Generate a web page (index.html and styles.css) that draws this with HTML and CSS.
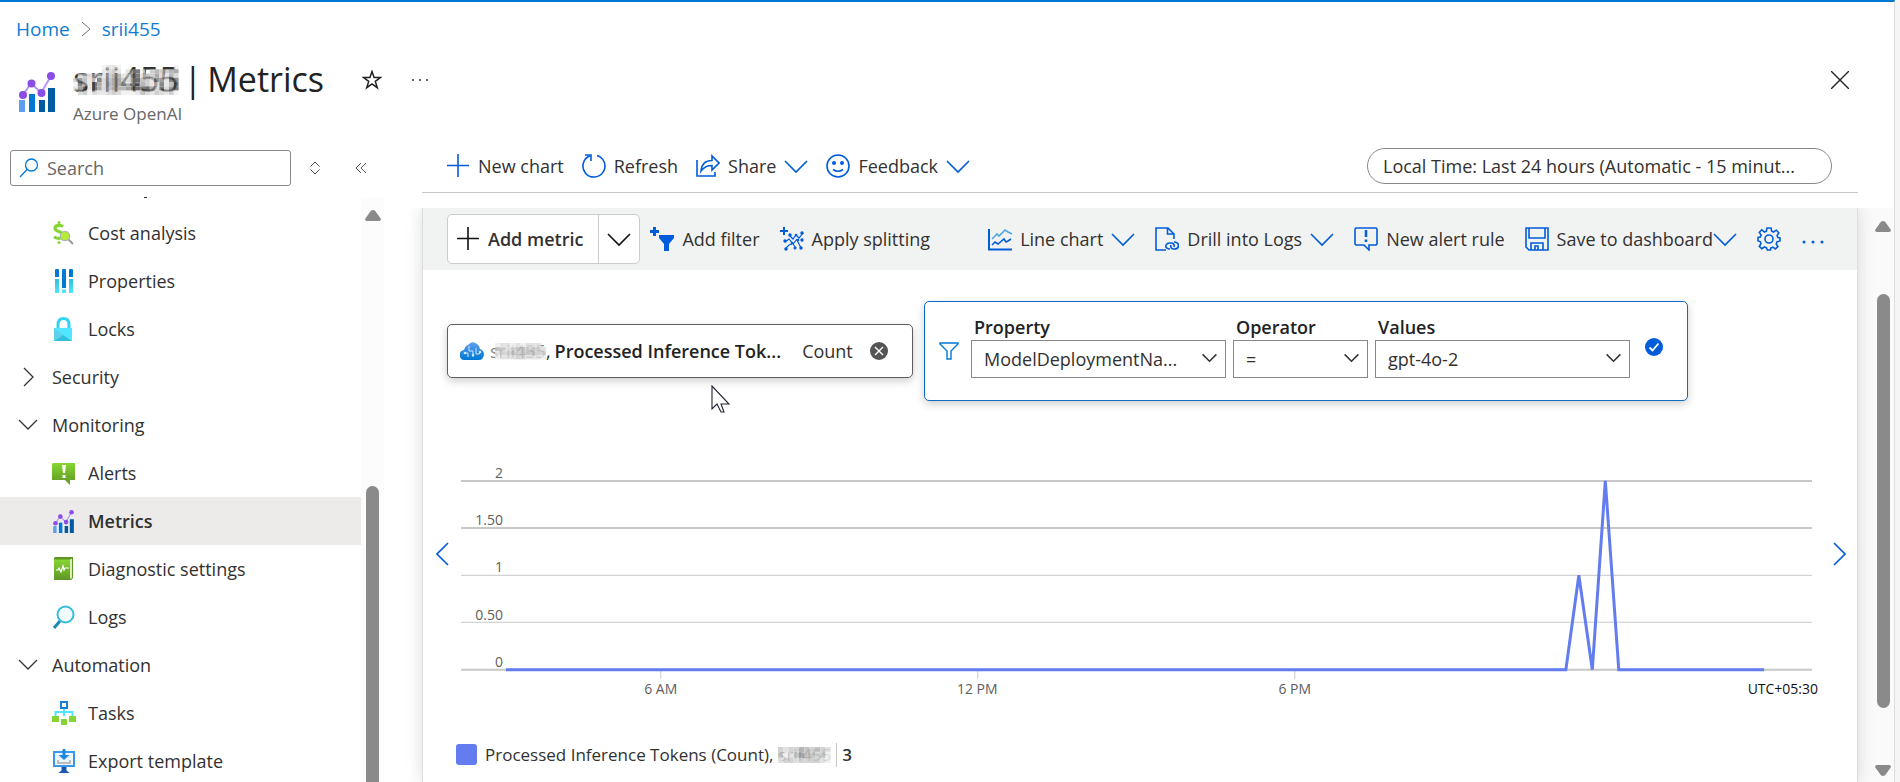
FILE: index.html
```html
<!doctype html>
<html lang="en">
<head>
    <meta charset="UTF-8">
    <title>Metrics</title>
    <link rel="stylesheet" href="styles.css">
</head>
<body>
    <svg class="defs" aria-hidden="true">
        <defs>
            <linearGradient id="green" x1="0" y1="0" x2="0" y2="1"><stop offset="0" stop-color="#86d633"/><stop offset="1" stop-color="#5e9624"/></linearGradient>
            <linearGradient id="cyan" x1="0" y1="0" x2="0" y2="1"><stop offset="0" stop-color="#32bedd"/><stop offset="1" stop-color="#50e6ff"/></linearGradient>
            <linearGradient id="cloud" x1="0" y1="0" x2="0" y2="1"><stop offset="0" stop-color="#5ea0ef"/><stop offset="1" stop-color="#0078d4"/></linearGradient>
        </defs>
        <symbol id="i-metrics" viewBox="0 0 36 40">
            <path fill="#5ea0ef" d="M0 28h6v12H0z"/><path fill="#0078d4" d="M10 22h6v18h-6z"/><path fill="#005ba1" d="M20 28h6v12h-6zM29 16h7v24h-7z"/>
            <path d="M4 23l8-12 10 10L32 4" fill="none" stroke="#b796f9" stroke-width="2"/>
            <g fill="#8a4ee6"><circle cx="4" cy="23" r="4"/><circle cx="12.500" cy="11.500" r="4"/><circle cx="22.500" cy="21" r="4"/><circle cx="32" cy="4" r="4"/></g>
        </symbol>
        <symbol id="i-down" viewBox="0 0 24 24"><path d="M1 7l11 11L23 7" fill="none" stroke="currentColor"/></symbol>
        <symbol id="i-plus" viewBox="0 0 24 24"><path d="M12 0v23M1 11.500h22" fill="none" stroke="currentColor" stroke-width="1.600"/></symbol>
    </svg>

    <div class="portal">
        <nav class="breadcrumb">
            <a href="#">Home</a>
            <svg width="10" height="16" viewBox="0 0 10 16"><path d="M1 1l8 7-8 7" fill="none" stroke="#777"/></svg>
            <a href="#">srii455</a>
        </nav>

        <header class="blade-head">
            <svg class="blade-icon" width="36" height="40"><use href="#i-metrics"/></svg>
            <div class="blade-title">
                <h1><span class="masked">srii455<svg class="mosaic js-mosaic" viewBox="0 0 22 7" preserveAspectRatio="none" data-rows="ffffffeddefffffffffffe,ffffffdcbdfd84efb9bb98,fdbcabdb99dc54dab8cd9c,c7ade5ca88bc73abd67d56,e5ad48c9889d859bdc5da4,d73d48ca899743438c4c74,fcbecddcbceeedacdbcdbe"></svg></span><span>|</span><span>Metrics</span></h1>
                <p>Azure OpenAI</p>
            </div>
            <button class="plain star" aria-label="Favorite">
                <svg width="20" height="20" viewBox="0 0 20 20"><path d="M10 1.500l2.100 6h6.400l-5.200 3.900 2 6.300L10 13.900l-5.300 3.800 2-6.300L1.500 7.500h6.400z" fill="none" stroke="#222" stroke-width="1.500"/></svg>
            </button>
            <button class="plain more" aria-label="More">
                <svg width="18" height="4" viewBox="0 0 18 4" fill="#333"><circle cx="2" cy="2" r="1"/><circle cx="9" cy="2" r="1"/><circle cx="16" cy="2" r="1"/></svg>
            </button>
            <button class="plain close" aria-label="Close">
                <svg width="18" height="18" viewBox="0 0 18 18"><path d="M0 0l18 18M18 0L0 18" stroke="#222" stroke-width="1.400"/></svg>
            </button>
        </header>

        <div class="blade-body">
            <aside class="side">
                <div class="side-top">
                    <label class="search">
                        <svg width="20" height="20" viewBox="0 0 20 20" fill="none" stroke="#0078d4" stroke-width="1.300"><circle cx="12.500" cy="7" r="6"/><path d="M8 11.500L1 19"/></svg>
                        <input type="text" placeholder="Search" aria-label="Search">
                    </label>
                    <button class="plain" aria-label="Sort"><svg width="12" height="14" viewBox="0 0 12 14" fill="none" stroke="#555"><path d="M1.500 5.500L6 1l4.500 4.500M1.500 8.500L6 13l4.500-4.500"/></svg></button>
                    <button class="plain" aria-label="Collapse"><svg width="12" height="12" viewBox="0 0 12 12" fill="none" stroke="#555"><path d="M6 1L1 6l5 5M11 1L6 6l5 5"/></svg></button>
                </div>
                <div class="side-scroll">
                    <ul class="menu">
                        <li><a href="#"><svg class="ico" viewBox="0 0 24 24">
                            <path d="M11 5.500C8.500 3.500 3 4 3 7.500S11 10 11 14s-6 4-9 1.800" fill="none" stroke="#86d633" stroke-width="3.200"/><circle cx="7" cy="1.500" r="1.500" fill="#86d633"/><circle cx="7" cy="21.500" r="1.500" fill="#86d633"/>
                            <circle cx="13" cy="15" r="4.600" fill="#b4ec36" stroke="#b3b3b3" stroke-width="1.200"/><path d="M16.500 18.500L21 23" stroke="#999" stroke-width="2"/></svg>Cost analysis</a></li>
                        <li><a href="#"><svg class="ico" viewBox="0 0 24 24">
                            <path fill="#0078d4" d="M3 0h3q1 0 1 1v7H3V1q0-1 1-1zM11 0h2q1 0 1 1v18h-4V1q0-1 1-1zM18 0h2q1 0 1 1v7h-4V1q0-1 1-1z"/>
                            <path fill="url(#cyan)" d="M3 10h4v14H3zM10 20.500h4V24h-4zM17 10h4v14h-4z"/></svg>Properties</a></li>
                        <li><a href="#"><svg class="ico" viewBox="0 0 24 24">
                            <path d="M6 12V8q0-6.500 5.500-6.500T17 8v4" fill="none" stroke="#32d4f5" stroke-width="3"/><path fill="#50e6ff" d="M2 11h18v13H2z"/><path fill="#32bedd" d="M2 24l9-6 9 6z"/><path fill="#5fd0ea" d="M2 11l9 7-9 6z"/></svg>Locks</a></li>
                        <li class="group"><a href="#"><svg class="chev" viewBox="0 0 20 20"><path d="M6 1l9 9-9 9" fill="none" stroke="#333" stroke-width="1.300"/></svg>Security</a></li>
                        <li class="group"><a href="#"><svg class="chev" viewBox="0 0 20 20"><path d="M1 5l9 9 9-9" fill="none" stroke="#333" stroke-width="1.300"/></svg>Monitoring</a></li>
                        <li><a href="#"><svg class="ico" viewBox="0 0 24 24"><path fill="url(#green)" d="M1 2h22v17h-5v5l-5-5H0V3z"/><path fill="#fff" d="M10 4h4l-1 8h-2zM10.500 14h3v3h-3z"/></svg>Alerts</a></li>
                        <li class="selected"><a href="#"><svg class="ico" viewBox="0 0 24 24"><use href="#i-metrics" x="1" y="1" width="21" height="23"/></svg>Metrics</a></li>
                        <li><a href="#"><svg class="ico" viewBox="0 0 24 24"><path fill="#5e9624" d="M3 0h18v21l-2 2H2V1z"/><path fill="#d8f0b8" d="M18 2.500l2-1V21l-2 1z"/><path fill="url(#green)" d="M2 2.500h16V23H2z"/><path d="M4 13h2l1-2 2 4 2-6 1 4 1-2h4" fill="none" stroke="#fff" stroke-width="1.200"/></svg>Diagnostic settings</a></li>
                        <li><a href="#"><svg class="ico" viewBox="0 0 24 24"><path d="M8 16l-6 7" stroke="#1988b3" stroke-width="3"/><circle cx="13.500" cy="9.500" r="8" fill="#f4fbfe" stroke="#32bedd" stroke-width="2"/></svg>Logs</a></li>
                        <li class="group"><a href="#"><svg class="chev" viewBox="0 0 20 20"><path d="M1 5l9 9 9-9" fill="none" stroke="#333" stroke-width="1.300"/></svg>Automation</a></li>
                        <li><a href="#"><svg class="ico" viewBox="0 0 24 24"><path d="M12 8v7M3.500 15v-4h17v4" fill="none" stroke="#50e6ff" stroke-width="2"/><path d="M9 1h6v6H9z" fill="#fff" stroke="#1b7fd8" stroke-width="2"/><path fill="#86d633" d="M0 15h7v6H0zM9 18h6v6H9zM17 15h7v6h-7z"/></svg>Tasks</a></li>
                        <li><a href="#"><svg class="ico" viewBox="0 0 24 24"><path d="M2 3h20v14H2z" fill="#eef7ff" stroke="#3a97ea" stroke-width="2"/><path fill="#1b8ae0" d="M10.500 0h3v6h4L12 11 6.500 6h4z"/><path d="M6 11v3h12v-3" fill="none" stroke="#aaa" stroke-width="1.500"/><path fill="#1a56b0" d="M9.500 18h5v3.500l3 2.500H6.500l3-2.500z"/></svg>Export template</a></li>
                    </ul>
                    <div class="track side-track">
                        <svg width="16" height="11" viewBox="0 0 16 11"><path d="M8 0q2 0 3 2l5 7q0 2-2 2H2q-2 0-2-2l5-7q1-2 3-2z" fill="#8a8a8a"/></svg>
                        <div class="thumb"></div>
                    </div>
                </div>
            </aside>

            <main class="content">
                <div class="commands">
                    <button><svg class="cmd"><use href="#i-plus"/></svg>New chart</button>
                    <button><svg class="cmd" viewBox="0 0 24 24" fill="none" stroke="currentColor"><path d="M15 1.500A11 11 0 1 1 8 1.800"/><path d="M3 1h6v6"/></svg>Refresh</button>
                    <button><svg class="cmd" viewBox="0 0 24 24" fill="none" stroke="currentColor"><path d="M1 6v16h18v-4"/><path d="M5 17Q6 6.500 16 6.500V2l7 7-7 7v-4.500Q9 11.500 5 17z"/></svg>Share<svg class="cmd"><use href="#i-down"/></svg></button>
                    <button><svg class="cmd" viewBox="0 0 24 24" fill="none" stroke="currentColor"><circle cx="12" cy="12" r="11"/><path d="M7 15.500q5 3.500 10 0"/><g fill="currentColor" stroke="none"><circle cx="8" cy="9" r="2"/><circle cx="16" cy="9" r="2"/></g></svg>Feedback<svg class="cmd"><use href="#i-down"/></svg></button>
                    <button class="pill">Local Time: Last 24 hours (Automatic - 15 minut...</button>
                </div>

                <div class="stage">
                    <section class="panel">
                        <div class="tools">
                            <div class="split">
                                <button><svg class="cmd"><use href="#i-plus"/></svg>Add metric</button>
                                <button aria-label="More metrics"><svg class="cmd"><use href="#i-down"/></svg></button>
                            </div>
                            <button><svg class="cmd" viewBox="0 0 24 24" fill="currentColor"><path d="M3 0h3v3h3v3H6v3H3V6H0V3h3z"/><path d="M9 8h15v3l-5 6v7h-5v-7l-5-6z"/></svg>Add filter</button>
                            <button><svg class="cmd" viewBox="0 0 24 24"><path d="M4 0v8M0 4h8" stroke="currentColor" stroke-width="2"/><path d="M9 8l4 4 3-4 3 3 4-5M5 15l4-3 4 5 4-5M5 22l4-4 3-1M17 13l4 8M13 17l3 4" fill="none" stroke="currentColor" stroke-width="1.200"/><g fill="currentColor"><circle cx="10" cy="8" r="1.700"/><circle cx="22" cy="6" r="1.700"/><circle cx="16" cy="8" r="1.300"/><circle cx="5" cy="14" r="1.700"/><circle cx="18" cy="13" r="1.300"/><circle cx="22" cy="13" r="1.700"/><circle cx="12" cy="16" r="1.300"/><circle cx="6" cy="22" r="1.700"/><circle cx="21" cy="21" r="1.700"/><circle cx="15" cy="21" r="1.500"/></g></svg>Apply splitting</button>
                            <button class="chart-type"><svg class="cmd" viewBox="0 0 24 24" fill="none"><path d="M1 2v20.500h23" stroke="currentColor" stroke-width="2"/><path d="M4 12l5-5 2 2 6-6 3 2 4 2" stroke="#50a8dc"/><path d="M4 18l3-3 3 2 6-5 2 3 2-1 3-2" stroke="currentColor"/></svg>Line chart<svg class="cmd"><use href="#i-down"/></svg></button>
                            <button><svg class="cmd" viewBox="0 0 24 24" fill="none" stroke="currentColor"><path d="M11 23H1V1h12l6 6v5M12.500 1v6H19"/><path d="M15 22h-1q-4-1-3-4 1-2 4-2h2q3 1 2 4M19 15h1q4 1 3.500 4-.5 3-4 3H18q-3-1-2-4"/></svg>Drill into Logs<svg class="cmd"><use href="#i-down"/></svg></button>
                            <button><svg class="cmd" viewBox="0 0 24 24" fill="none" stroke="currentColor"><path d="M2 1h20l1 1v15l-1 1h-7v5l-5-5H2l-1-1V2z"/><path d="M12 3v7M12 12.500V15" stroke-width="2.500"/></svg>New alert rule</button>
                            <button class="save"><svg class="cmd" viewBox="0 0 24 24" fill="none" stroke="currentColor"><path d="M1 1h22v22H4l-3-3zM4 1v10h16V1M6 23v-7h12v7M10 23v-4h3v4"/></svg>Save to dashboard<svg class="cmd"><use href="#i-down"/></svg></button>
                            <button aria-label="Settings"><svg class="cmd" viewBox="0 0 24 24" fill="none" stroke="currentColor"><circle cx="12" cy="12" r="4"/><path d="M10 1h4l.7 3.200 1.800.8 2.800-1.800 2.500 2.600-1.700 2.700.8 2L23 11v3l-3 .8-.8 2 1.700 2.700-2.500 2.400-2.600-1.700-2 .8L13.500 23h-3.200l-.8-2.200-2-.8-2.700 1.700-2.500-2.400L4 16.600l-.8-2L1 14v-3.500l2.300-.5.8-2-1.800-2.700 2.500-2.500L7.500 5l1.800-.8z"/></svg></button>
                            <button aria-label="More"><svg class="cmd" viewBox="0 0 24 24" fill="currentColor"><circle cx="3" cy="15" r="1.500"/><circle cx="12" cy="15" r="1.500"/><circle cx="21" cy="15" r="1.500"/></svg></button>
                        </div>

                        <div class="pickers">
                            <div class="metric">
                                <svg width="24" height="18" viewBox="0 0 24 18"><path d="M5 18a5 5 0 0 1-1-10Q5 4 8 3q4-5 9-1 3 2 3 5 4 1 4 5.500Q23 18 19 18z" fill="url(#cloud)"/><path d="M9 4v5h4v6M5 11h3v4M16 6v6h3l2-2" fill="none" stroke="#cfe6fb"/><g fill="#cfe6fb"><circle cx="5" cy="11" r="1.300"/><circle cx="13" cy="13" r="1.300"/><circle cx="20" cy="10" r="1.300"/></g></svg>
                                <span class="masked">srii455<svg class="mosaic js-mosaic" viewBox="0 0 11 4" preserveAspectRatio="none" data-rows="feddededddf,fbcdcbbcbcd,fdccbcbbbcc,fedddccddde"></svg></span><span>,</span>
                                <b>Processed Inference Tok...</b>
                                <span class="agg">Count</span>
                                <button class="plain" aria-label="Remove metric"><svg width="18" height="18" viewBox="0 0 18 18"><circle cx="9" cy="9" r="9" fill="#555"/><path d="M5 5l8 8M13 5l-8 8" stroke="#fff" stroke-width="1.400"/></svg></button>
                                <svg class="cursor" width="20" height="28" viewBox="0 0 20 28"><path d="M1 1v23l5-5 4 8h3l-3-8h8z" fill="#fff" stroke="#223" stroke-width="1.100"/></svg>
                            </div>

                            <div class="filter">
                                <svg class="funnel" width="20" height="18" viewBox="0 0 20 18"><path d="M1 1h18v1l-7 7v8H8V9L1 2z" fill="none" stroke="#0078d4" stroke-width="1.400"/></svg>
                                <div class="field wide">
                                    <label for="property">Property</label>
                                    <div class="drop"><select id="property"><option>ModelDeploymentNa...</option></select><svg><use href="#i-down"/></svg></div>
                                </div>
                                <div class="field">
                                    <label for="operator">Operator</label>
                                    <div class="drop"><select id="operator"><option>=</option></select><svg><use href="#i-down"/></svg></div>
                                </div>
                                <div class="field wide">
                                    <label for="values">Values</label>
                                    <div class="drop"><select id="values"><option>gpt-4o-2</option></select><svg><use href="#i-down"/></svg></div>
                                </div>
                                <button class="plain apply" aria-label="Apply"><svg width="18" height="18" viewBox="0 0 18 18"><circle cx="9" cy="9" r="9" fill="#015cda"/><path d="M4.500 9.500l3 3 6-7" fill="none" stroke="#fff" stroke-width="1.800"/></svg></button>
                            </div>
                        </div>

                        <div class="chart">
                            <button class="plain" aria-label="Earlier"><svg width="13" height="26" viewBox="0 0 13 26"><path d="M12 2L1 13l11 11" fill="none" stroke="#015cda" stroke-width="1.600"/></svg></button>
                            <svg class="plot" viewBox="0 0 1362 240">
                                <g fill="none" stroke="#c8c8c8">
                                    <path d="M0 22h1353M0 69h1353M0 211h1353" stroke-width="2"/>
                                    <path d="M0 116.500h1353M0 163.500h1353"/>
                                    <path d="M200 212v8M517.500 212v8M835 212v8"/>
                                </g>
                                <path class="series" d="M45 211H1106.500L1119.500 116.500 1133 211 1146 22 1159.500 211H1305"/>
                                <g class="axis-y">
                                    <text x="42" y="19">2</text>
                                    <text x="42" y="66">1.50</text>
                                    <text x="42" y="113">1</text>
                                    <text x="42" y="161">0.50</text>
                                    <text x="42" y="208">0</text>
                                </g>
                                <g class="axis-x">
                                    <text x="200" y="235">6 AM</text>
                                    <text x="517" y="235">12 PM</text>
                                    <text x="835" y="235">6 PM</text>
                                </g>
                                <text class="zone" x="1359" y="235">UTC+05:30</text>
                            </svg>
                            <button class="plain" aria-label="Later"><svg width="13" height="26" viewBox="0 0 13 26"><path d="M1 2l11 11L1 24" fill="none" stroke="#015cda" stroke-width="1.600"/></svg></button>
                        </div>

                        <div class="legend">
                            <span class="swatch"></span>
                            <span>Processed Inference Tokens (Count),</span>
                            <span class="masked">srii455<svg class="mosaic js-mosaic" viewBox="0 0 10 3" preserveAspectRatio="none" data-rows="cdccabcbcd,bedb9bbcbe,dccdccccde"></svg></span>
                            <b>3</b>
                        </div>
                    </section>
                    <div class="track main-track">
                        <svg width="16" height="11" viewBox="0 0 16 11"><path d="M8 0q2 0 3 2l5 7q0 2-2 2H2q-2 0-2-2l5-7q1-2 3-2z" fill="#8a8a8a"/></svg>
                        <div class="thumb"></div>
                        <svg width="16" height="11" viewBox="0 0 16 11"><path d="M8 11q2 0 3-2l5-7q0-2-2-2H2Q0 0 0 2l5 7q1 2 3 2z" fill="#8a8a8a"/></svg>
                    </div>
                </div>
            </main>
        </div>
    </div>

    <script type="text/javascript">
        // each hex digit is one grey block, f is left empty
        var mosaics = document.querySelectorAll('.js-mosaic');

        [].forEach.call(mosaics, function(svg) {
            svg.getAttribute('data-rows').split(',').forEach(function(row, y) {
                row.split('').forEach(function(c, x) {
                    if(c == 'f') return;
                    var r = document.createElementNS('http://www.w3.org/2000/svg', 'rect');
                    r.setAttribute('x', x);
                    r.setAttribute('y', y);
                    r.setAttribute('width', 1);
                    r.setAttribute('height', 1);
                    r.setAttribute('fill', '#' + c + c + c);
                    svg.appendChild(r);
                })
            })
        })
    </script>
</body>
</html>
```

FILE: styles.css
```css
*{box-sizing:border-box;padding:0;margin:0;}

body{
    height:100vh;
    overflow:hidden;
    background:#f5f5f5;
    color:#323130;
    font:18px/24px "Open Sans","Noto Sans",sans-serif;
}
a{color:inherit;text-decoration:none;}
button,input,select{font:inherit;color:inherit;}
button{
    display:flex;
    align-items:center;
    border:0;
    background:none;
    white-space:nowrap;
}
svg{flex:none;display:block;}
.defs{position:absolute;width:0;height:0;}

.portal{
    display:flex;
    flex-direction:column;
    height:100%;
    margin-right:5px;
    background:#fff;
    border-top:2px solid #0078d4;
    border-right:1px solid #ddd;
}

/* header */
.breadcrumb{
    display:flex;
    align-items:center;
    gap:11px;
    padding:15px 16px;
    font-size:19px;
    color:#0f7bd4;
}
.blade-head{
    display:flex;
    padding:0 45px 0 19px;
    height:93px;
}
.blade-icon{margin-top:16px;}
.blade-title{margin-left:18px;padding-top:1px;}
.blade-title h1{
    display:flex;
    gap:5px;
    font-size:34px;
    line-height:44px;
    font-weight:400;
    color:#222;
}
.blade-title p{
    font-size:17px;
    line-height:24px;
    margin-top:1px;
    color:#666;
}
.star{height:48px;margin-left:38px;}
.more{height:48px;margin-left:29px;}
.close{height:48px;margin-left:auto;}

.masked{
    position:relative;
    display:inline-block;
    color:#888;
}
.mosaic{
    position:absolute;
    left:0;
    top:18%;
    width:100%;
    height:68%;
    opacity:.85;
}
h1 .masked{color:#333;}
h1 .mosaic{opacity:.7;}

/* left menu */
.blade-body{
    display:flex;
    flex:1;
    min-height:0;
}
.side{
    display:flex;
    flex-direction:column;
    width:384px;
}
.side-top{
    display:flex;
    align-items:center;
    gap:34px;
    padding-left:10px;
    height:37px;
}
.search{
    display:flex;
    align-items:center;
    gap:8px;
    width:281px;
    height:36px;
    padding-left:8px;
    margin-right:-16px;
    border:1px solid #8a8886;
    border-radius:3px;
}
.search input{
    flex:1;
    min-width:0;
    border:0;
    outline:0;
    background:none;
}
.search input::placeholder{color:#666;opacity:1;}
.side-scroll{
    display:flex;
    flex:1;
    min-height:0;
    margin-top:11px;
    overflow:hidden;
}
.menu{
    flex:1;
    list-style:none;
}
/* tail of the entry scrolled out above */
.menu:before{
    content:"";
    display:block;
    width:3px;
    height:1px;
    margin:0 0 11px 144px;
    background:#323130;
}
.menu a{
    display:flex;
    align-items:center;
    gap:12px;
    height:48px;
    padding-left:52px;
}
.menu .group a{gap:14px;padding-left:18px;}
.menu .selected{background:#edebe9;font-weight:600;}
.ico{width:24px;height:24px;}
.chev{width:20px;height:20px;}
.track{
    display:flex;
    flex-direction:column;
    align-items:center;
    background:#fcfcfc;
}
.thumb{
    width:13px;
    border-radius:7px;
    background:#8a8a8a;
}
.side-track{width:23px;padding-top:13px;}
.side-track .thumb{
    flex:1;
    margin-top:265px;
    border-radius:7px 7px 0 0;
}

/* commands */
.content{
    display:flex;
    flex-direction:column;
    flex:1;
    min-width:0;
}
.commands{
    display:flex;
    align-items:center;
    gap:18px;
    height:44px;
    padding:0 26px 10px 24px;
    margin:0 36px 0 38px;
    border-bottom:1px solid #c8c6c4;
}
.commands button,.tools button{gap:8px;}
.cmd{width:24px;height:24px;color:#015cda;stroke-width:1.6;}
.commands .pill{
    width:465px;
    height:36px;
    padding:0 15px;
    margin-left:auto;
    border:1px solid #8a8886;
    border-radius:18px;
}

.stage{
    display:flex;
    flex:1;
    min-height:0;
    margin-top:15px;
    padding-left:38px;
    overflow:hidden;
}
.panel{
    z-index:1;
    flex:1;
    min-width:0;
    background:#fff;
    border:solid #ddd;
    border-width:0 1px;
    box-shadow:0 0 16px rgba(0,0,0,.14);
}
.main-track{
    width:36px;
    padding:13px 0 6px 14px;
    background:#fafafa;
}
.main-track .thumb{height:414px;margin:62px 0 auto;}

.tools{
    display:flex;
    align-items:center;
    gap:20px;
    height:62px;
    padding:0 32px 0 24px;
    background:#f1f3f3;
}
.split{
    display:flex;
    height:50px;
    margin:0 -10px 0 0;
    background:#fff;
    border:1px solid #ccc;
    border-radius:5px;
    font-weight:600;
}
.split .cmd{color:#111;}
.split button{padding:0 15px 0 8px;}
.split button+button{padding:0 8px;border-left:1px solid #ccc;}
.chart-type{margin-left:auto;}
.save .cmd:last-child{margin-left:-8px;}

/* metric and filter */
.pickers{
    display:flex;
    align-items:center;
    gap:11px;
    padding:31px 24px 0;
}
.metric,.filter{
    position:relative;
    display:flex;
    align-items:center;
    background:#fff;
    border:1px solid #605e5c;
    border-radius:5px;
    box-shadow:0 3px 8px rgba(0,0,0,.2);
}
.metric{
    width:466px;
    height:54px;
    padding:0 24px 0 12px;
    white-space:nowrap;
}
.metric .masked{margin-left:6px;}
.metric b{margin-left:4px;font-weight:600;color:#222;}
.agg{margin-left:21px;}
.metric button{margin-left:auto;}
.cursor{position:absolute;left:263px;top:60px;}
.filter{
    gap:7px;
    height:100px;
    padding:0 24px 0 14px;
    border-color:#0f6cbd;
}
.funnel{margin-right:5px;}
.field{width:135px;margin-top:-10px;}
.field.wide{width:255px;}
.field label{
    display:block;
    padding-left:3px;
    font-weight:600;
    color:#222;
}
.drop{position:relative;margin-top:1px;}
.drop select{
    appearance:none;
    display:block;
    width:100%;
    height:38px;
    padding:0 36px 0 12px;
    border:1px solid #8a8886;
    border-radius:0;
    background:#fff;
}
.drop svg{
    position:absolute;
    right:9px;
    top:10px;
    width:15px;
    height:15px;
    stroke-width:2.4;
    pointer-events:none;
}
.apply{margin:-8px 0 0 8px;}

/* chart */
.chart{
    display:flex;
    align-items:flex-start;
    gap:12px;
    padding:0 11px 0 13px;
    margin-top:58px;
}
.chart button{margin-top:82px;}
.plot{flex:1;min-width:0;}
.series{fill:none;stroke:#637cef;stroke-width:3;}
.plot text{font-size:14px;fill:#605e5c;}
.axis-y{text-anchor:end;}
.axis-x{text-anchor:middle;}
.plot .zone{text-anchor:end;fill:#111;}
.legend{
    display:flex;
    align-items:center;
    gap:5px;
    padding:0 33px;
    margin-top:44px;
    font-size:17px;
}
.swatch{
    width:21px;
    height:21px;
    margin-right:3px;
    border-radius:3px;
    background:#637cef;
}
.legend b{
    padding-left:5px;
    border-left:1px solid #c8c8c8;
    font-weight:600;
}
```
